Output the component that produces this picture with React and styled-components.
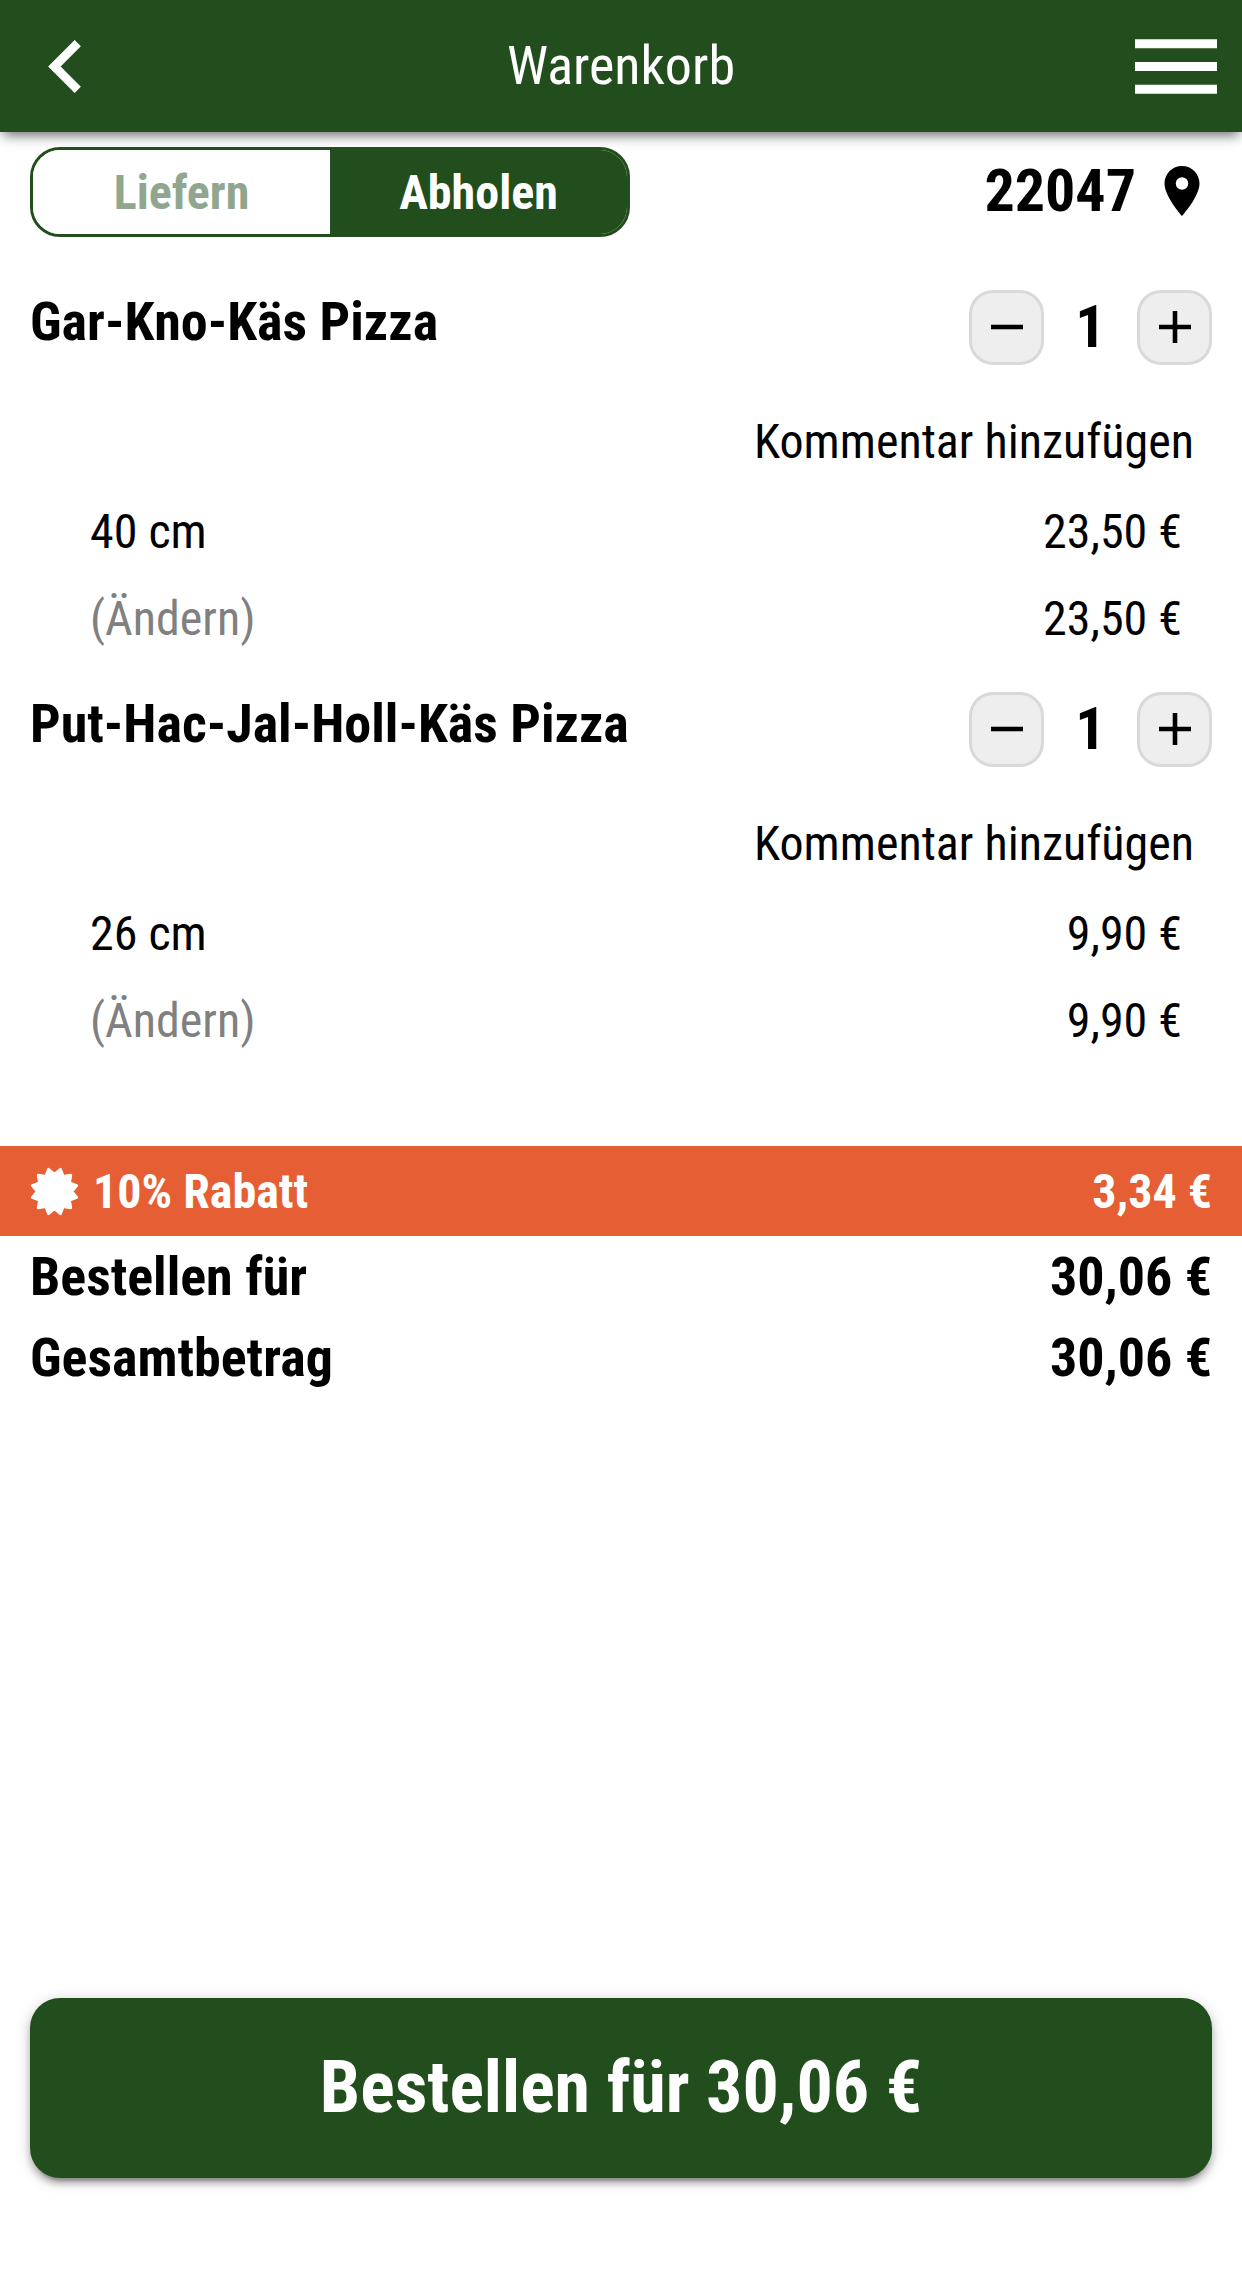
import React from 'react';
import styled, { createGlobalStyle } from 'styled-components';

const green = '#224d1c';

const GlobalStyle = createGlobalStyle`
  *, *::before, *::after { box-sizing: border-box; }
  body { margin: 0; background: #fff; }
`;

const Page = styled.div`
  display: flex;
  flex-direction: column;
  width: 1242px;
  height: 2271px;
  overflow: hidden;
  background: #fff;
  color: #000;
  font-family: 'Roboto Condensed', Roboto, sans-serif;
  font-stretch: 75%;
  font-size: 48px;
  line-height: 1;
  white-space: nowrap;
`;

const Header = styled.header`
  display: grid;
  grid-template-columns: 1fr auto 1fr;
  align-items: center;
  flex: none;
  height: 132px;
  background: ${green};
  color: #fff;
  box-shadow: 0 6px 12px -3px rgba(0, 0, 0, 0.6);
`;

const Title = styled.h1`
  margin: 0;
  padding-bottom: 1px;
  font-size: 54px;
  font-weight: 400;
`;

const IconButton = styled.button`
  display: flex;
  justify-self: ${(p) => p.$side};
  padding: 0 25px 0 48px;
  border: 0;
  background: none;
  color: inherit;
`;

const ModeBar = styled.section`
  display: flex;
  justify-content: space-between;
  align-items: center;
  flex: none;
  height: 90px;
  margin: 15px 30px 23px;
`;

const Toggle = styled.div`
  display: flex;
  width: 600px;
  height: 90px;
  border: 3px solid ${green};
  border-radius: 30px;
  overflow: hidden;
`;

const ToggleOption = styled.button`
  flex: 1;
  padding: 2px 0 0;
  border: 0;
  background: ${(p) => (p.$active ? green : '#fff')};
  color: ${(p) => (p.$active ? '#fff' : '#90a68e')};
  font: inherit;
  font-weight: 700;
`;

const Location = styled.div`
  display: flex;
  align-items: center;
  gap: 16px;
  padding-bottom: 2px;
  font-size: 60px;
  font-weight: 700;
`;

const Item = styled.article`
  display: flex;
  flex-direction: column;
  flex: none;
`;

const ItemHead = styled.div`
  display: flex;
  justify-content: space-between;
  align-items: center;
  height: 135px;
  padding: 0 30px 1px;
`;

const ItemName = styled.h2`
  margin: 0;
  padding-bottom: 10px;
  font-size: 54px;
  font-weight: 700;
`;

const Stepper = styled.div`
  display: grid;
  grid-template-columns: 75px 93px 75px;
  align-items: center;
`;

const StepButton = styled.button`
  display: flex;
  align-items: center;
  justify-content: center;
  height: 75px;
  padding: 0;
  border: 3px solid #d9d9d9;
  border-radius: 24px;
  background: #eee;
  color: #000;
`;

const Quantity = styled.span`
  padding-bottom: 1px;
  text-align: center;
  font-size: 60px;
  font-weight: 700;
`;

const CommentLink = styled.div`
  height: 93px;
  padding-right: 48px;
  line-height: 93px;
  text-align: right;
`;

const DetailRow = styled.div`
  display: flex;
  justify-content: space-between;
  align-items: center;
  height: 87px;
  padding: 0 60px 0 90px;
`;

const Change = styled.span`
  color: #808080;
`;

const Discount = styled.section`
  display: flex;
  align-items: center;
  flex: none;
  height: 90px;
  margin-top: 82px;
  padding: 0 30px;
  background: #e55e34;
  color: #fff;
  font-weight: 700;
`;

const DiscountLabel = styled.span`
  flex: 1;
  padding: 1px 0 0 14px;
`;

const DiscountValue = styled.span`
  padding-top: 1px;
`;

const TotalRow = styled.div`
  display: flex;
  justify-content: space-between;
  align-items: center;
  flex: none;
  height: 81px;
  padding: 0 30px;
  font-size: 54px;
  font-weight: 700;
`;

const OrderButton = styled.button`
  flex: none;
  height: 180px;
  margin: auto 30px 93px;
  border: 0;
  border-radius: 30px;
  background: ${green};
  color: #fff;
  font: inherit;
  font-size: 72px;
  font-weight: 700;
  box-shadow: 0 3px 15px rgba(0, 0, 0, 0.2), 0 6px 6px rgba(0, 0, 0, 0.2),
    0 9px 3px -6px rgba(0, 0, 0, 0.2);
`;

const PlusMinus = ({ plus }) => (
  <svg width="32" height="32" viewBox="5 5 14 14" fill="currentColor">
    <path d={plus ? 'M19 13h-6v6h-2v-6H5v-2h6V5h2v6h6z' : 'M19 13H5v-2h14z'} />
  </svg>
);

// Twelve-pointed seal: odd steps are tips, even steps are the notches between.
const badgePoints = Array.from({ length: 24 }, (_, i) => {
  const r = i % 2 ? 22.9 : 17.2;
  const a = (i * Math.PI) / 12;
  return `${(24.5 + r * Math.sin(a)).toFixed(2)},${(24.5 - r * Math.cos(a)).toFixed(2)}`;
}).join(' ');

const Badge = () => (
  <svg width="49" height="49" viewBox="0 0 49 49" fill="currentColor">
    <polygon points={badgePoints} stroke="currentColor" strokeWidth="3" strokeLinejoin="round" />
  </svg>
);

const items = [
  { name: 'Gar-Kno-Käs Pizza', size: '40 cm', price: '23,50 €' },
  { name: 'Put-Hac-Jal-Holl-Käs Pizza', size: '26 cm', price: '9,90 €' },
];

const CartItem = ({ name, size, price }) => (
  <Item>
    <ItemHead>
      <ItemName>{name}</ItemName>
      <Stepper>
        <StepButton aria-label="Weniger"><PlusMinus /></StepButton>
        <Quantity>1</Quantity>
        <StepButton aria-label="Mehr"><PlusMinus plus /></StepButton>
      </Stepper>
    </ItemHead>
    <CommentLink>Kommentar hinzufügen</CommentLink>
    <DetailRow><span>{size}</span><span>{price}</span></DetailRow>
    <DetailRow><Change>(Ändern)</Change><span>{price}</span></DetailRow>
  </Item>
);

export default function App() {
  return (
    <>
      <GlobalStyle />
      <Page>
        <Header>
          <IconButton $side="start" aria-label="Zurück">
            <svg width="33" height="53" viewBox="8 6 7.41 12" fill="currentColor">
              <path d="M15.41 7.41 14 6l-6 6 6 6 1.41-1.41L10.83 12z" />
            </svg>
          </IconButton>
          <Title>Warenkorb</Title>
          <IconButton $side="end" aria-label="Menü">
            <svg width="82" height="55" viewBox="3 6 18 12" fill="currentColor">
              <path d="M3 18h18v-2H3zm0-5h18v-2H3zm0-7v2h18V6z" />
            </svg>
          </IconButton>
        </Header>
        <ModeBar>
          <Toggle>
            <ToggleOption>Liefern</ToggleOption>
            <ToggleOption $active>Abholen</ToggleOption>
          </Toggle>
          <Location>
            <span>22047</span>
            <svg width="60" height="60" viewBox="0 0 24 24" fill="currentColor">
              <path d="M12 2C8.13 2 5 5.13 5 9c0 5.25 7 13 7 13s7-7.75 7-13c0-3.87-3.13-7-7-7zm0 9.500a2.500 2.500 0 0 1 0-5 2.500 2.500 0 0 1 0 5z" />
            </svg>
          </Location>
        </ModeBar>
        {items.map((item) => <CartItem key={item.name} {...item} />)}
        <Discount>
          <Badge />
          <DiscountLabel>10% Rabatt</DiscountLabel>
          <DiscountValue>3,34 €</DiscountValue>
        </Discount>
        <TotalRow><span>Bestellen für</span><span>30,06 €</span></TotalRow>
        <TotalRow><span>Gesamtbetrag</span><span>30,06 €</span></TotalRow>
        <OrderButton>Bestellen für 30,06 €</OrderButton>
      </Page>
    </>
  );
}
